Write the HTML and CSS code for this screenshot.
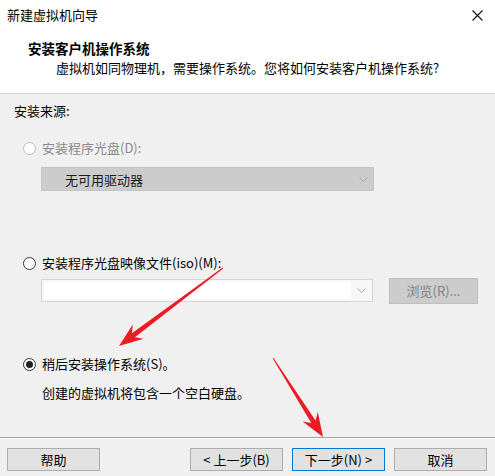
FILE: index.html
```html
<!DOCTYPE html>
<html lang="zh-CN">
<head>
  <meta charset="UTF-8" />
  <title>新建虚拟机向导</title>
  <link rel="stylesheet" href="styles.css">
</head>
<body>
  <div class="dialog">
    <div class="top">
      <div class="titlebar">
        <span class="title">新建虚拟机向导</span>
        <svg class="close" width="11" height="11" viewBox="0 0 11 11">
          <path d="M0.5 0.5 L10.5 10.5 M10.5 0.5 L0.5 10.5" stroke="#111" stroke-width="1.1" fill="none"/>
        </svg>
      </div>
      <div class="header">
        <div class="h-title">安装客户机操作系统</div>
        <div class="h-sub">虚拟机如同物理机，需要操作系统。您将如何安装客户机操作系统?</div>
      </div>
    </div>

    <div class="content">
      <div class="section-label">安装来源:</div>

      <div class="radio disabled first">
        <span class="dot"></span>安装程序光盘(D):
      </div>
      <div class="select">
        <span>无可用驱动器</span>
        <svg class="chev" width="9" height="5" viewBox="0 0 9 5"><path d="M0.5 0.5 L4.5 4.5 L8.5 0.5" stroke="#a8a8a8" fill="none"/></svg>
      </div>

      <div class="radio second">
        <span class="dot"></span>安装程序光盘映像文件(iso)(M):
      </div>
      <div class="iso-row">
        <div class="combo">
          <div class="combo-field"></div>
          <svg class="chev" width="9" height="5" viewBox="0 0 9 5"><path d="M0.5 0.5 L4.5 4.5 L8.5 0.5" stroke="#a8a8a8" fill="none"/></svg>
        </div>
        <div class="btn browse">浏览(R)...</div>
      </div>

      <div class="radio checked third">
        <span class="dot"></span>稍后安装操作系统(S)。
      </div>
      <div class="note">创建的虚拟机将包含一个空白硬盘。</div>
    </div>

    <div class="footer">
      <div class="btn">帮助</div>
      <div class="spacer"></div>
      <div class="btn">&lt; 上一步(B)</div>
      <div class="btn primary">下一步(N) &gt;</div>
      <div class="btn">取消</div>
    </div>

    <!-- annotation arrows drawn over the dialog -->
    <svg class="arrows" width="495" height="476" viewBox="0 0 495 476">
      <polygon fill="#ec1c24" points="223.3,268.4 134.9,337.2 143.6,338.8 119,346 132.8,324.4 131.9,333.2 222.7,267.6"/>
      <polygon fill="#ec1c24" points="272.6,358.3 311.3,423.1 302.6,421.5 323,437 317.8,411.9 315.5,420.5 273.4,357.7"/>
    </svg>
  </div>
</body>
</html>
```

FILE: styles.css
```css
html, body {
  margin: 0;
  padding: 0;
  background: #f0f0f0;
}

body {
  font-family: "Noto Sans CJK SC", "Noto Sans", sans-serif;
  font-size: 13px;
  color: #000;
}

.dialog {
  position: relative;
  width: 495px;
  height: 476px;
  display: flex;
  flex-direction: column;
  overflow: hidden;
}

.top {
  height: 93px;
  background: #fff;
  border-bottom: 1px solid #d6d6d6;
}

.titlebar {
  height: 30px;
  display: flex;
  align-items: center;
  padding: 0 12px 0 7px;
}

.title {
  flex: 1;
  line-height: 18px;
}

.header {
  padding: 9px 0 0 28px;
}

.h-title {
  font-weight: bold;
  font-size: 13.5px;
  line-height: 18px;
}

.h-sub {
  margin-top: 2px;
  padding-left: 28px;
  line-height: 18px;
}

.content {
  flex: 1;
  display: flex;
  flex-direction: column;
  align-items: flex-start;
}

.section-label {
  margin: 8px 0 0 14px;
  line-height: 18px;
}

.radio {
  display: flex;
  align-items: center;
  margin-left: 23px;
  line-height: 18px;
}

.radio .dot {
  width: 11px;
  height: 11px;
  border: 1px solid #333;
  border-radius: 50%;
  background: #fff;
  margin-right: 6px;
  position: relative;
}

.radio.disabled {
  color: #8a8a8a;
}

.radio.disabled .dot {
  border-color: #bcbcbc;
}

.radio.checked .dot::after {
  content: "";
  position: absolute;
  left: 2px;
  top: 2px;
  width: 7px;
  height: 7px;
  border-radius: 50%;
  background: #222;
}

.radio.first { margin-top: 19px; }
.radio.second { margin-top: 63px; }
.radio.third { margin-top: 51px; }

.select {
  margin: 10px 0 0 41px;
  width: 333px;
  height: 24px;
  box-sizing: border-box;
  background: #cccccc;
  border: 1px solid #c4c4c4;
  display: flex;
  align-items: center;
  padding: 0 5px 0 23px;
  color: #1a1a1a;
}

.select span {
  flex: 1;
}

.iso-row {
  margin: 6px 0 0 41px;
  display: flex;
  align-items: flex-start;
  gap: 16px;
}

.combo {
  margin-top: 1px;
  width: 332px;
  height: 23px;
  box-sizing: border-box;
  border: 1px solid #d4d4d4;
  background: #f7f7f7;
  display: flex;
  align-items: center;
  padding: 2px 6px 2px 2px;
}

.combo-field {
  flex: 1;
  height: 100%;
  background: #fff;
  margin-right: 6px;
}

.btn {
  width: 93px;
  height: 23px;
  box-sizing: border-box;
  background: #e1e1e1;
  border: 1px solid #adadad;
  display: flex;
  align-items: center;
  justify-content: center;
  line-height: 18px;
}

.btn.browse {
  width: 89px;
  height: 26px;
  background: #cccccc;
  border-color: #bfbfbf;
  color: #838383;
}

.btn.primary {
  border-color: #0078d7;
}

.note {
  margin: 11px 0 0 42px;
  line-height: 18px;
}

.footer {
  height: 36px;
  border-top: 1px solid #a0a0a0;
  box-shadow: inset 0 1px 0 #fff;
  display: flex;
  align-items: flex-start;
  padding: 10px 8px 0 7px;
  gap: 9px;
  box-sizing: border-box;
  height: 39px;
}

.spacer {
  flex: 1;
}

.arrows {
  position: absolute;
  left: 0;
  top: 0;
  pointer-events: none;
}
```
